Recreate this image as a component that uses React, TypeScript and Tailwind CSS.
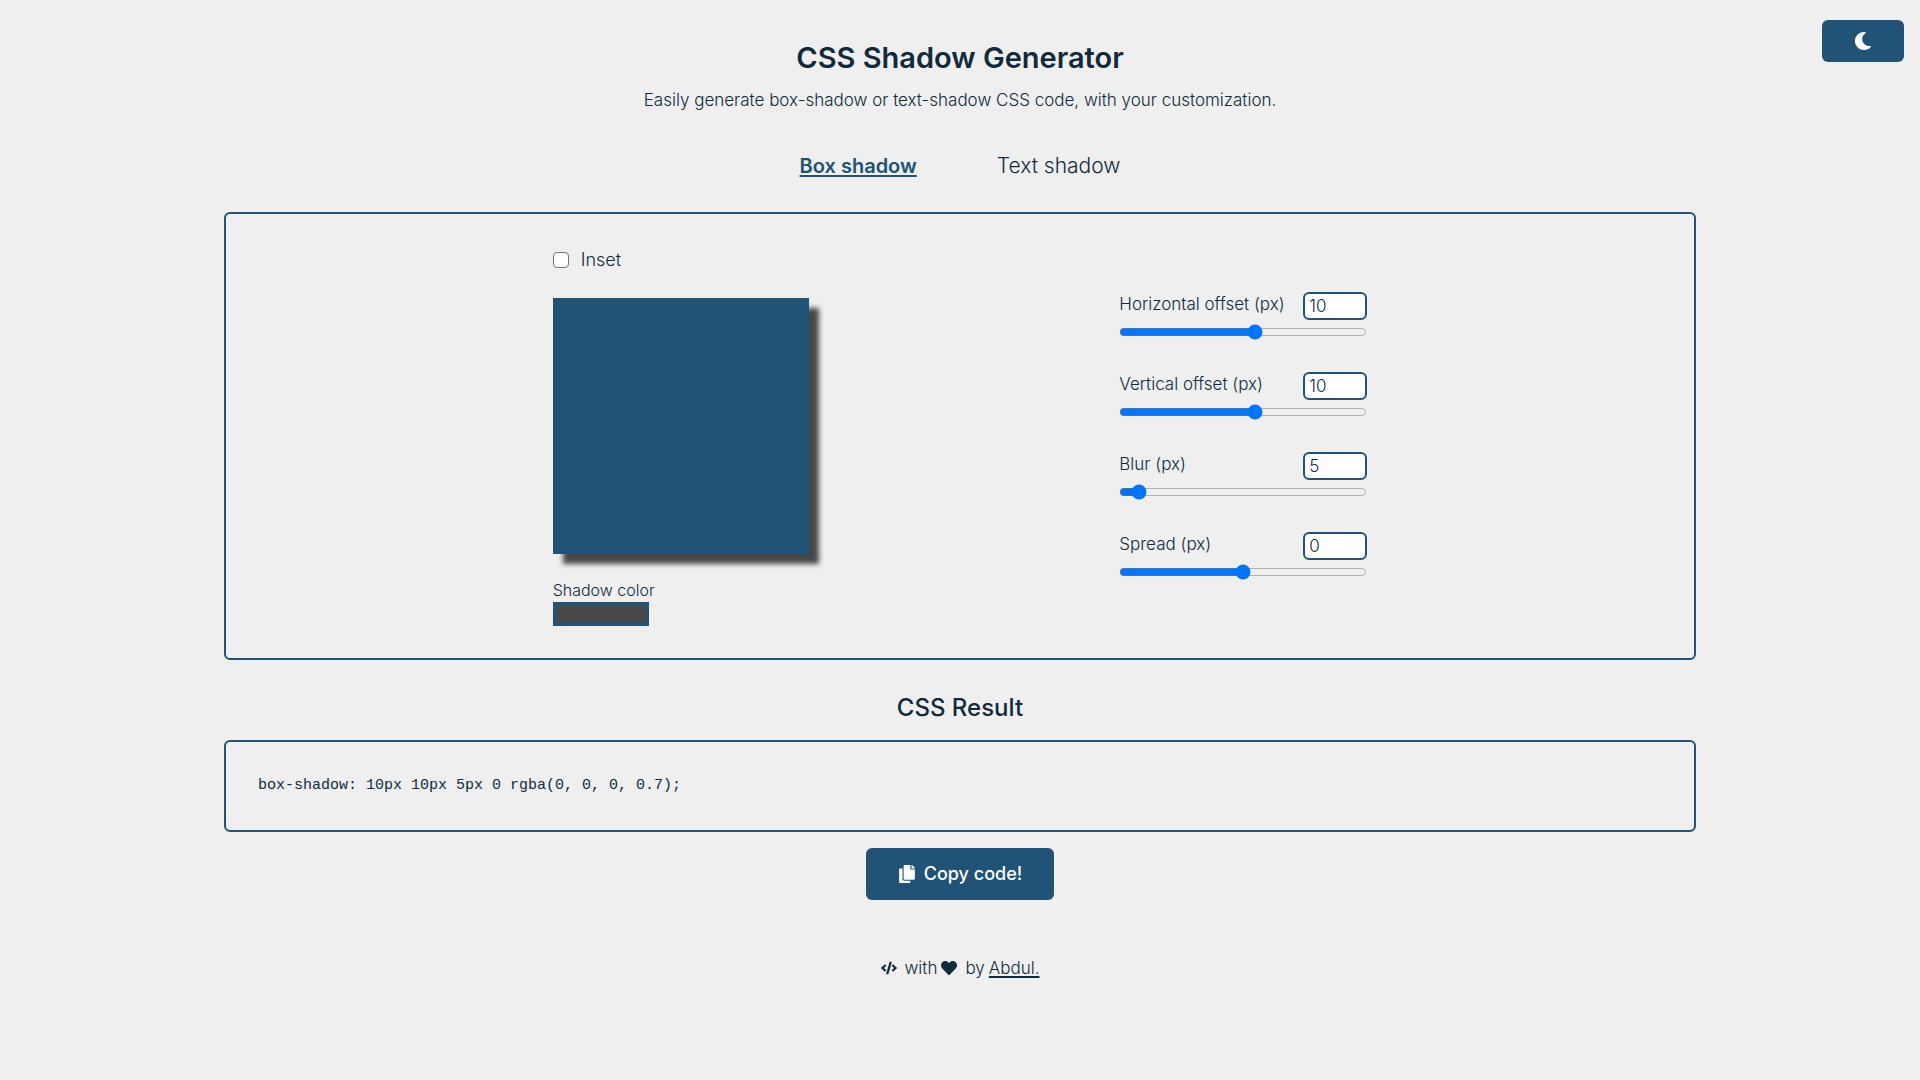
import React, { useId, useState } from "react";
import { FaCode, FaCopy, FaHeart, FaMoon } from "react-icons/fa";

type Mode = "box" | "text";

function Tab({ active, onClick, children }: { active: boolean; onClick: () => void; children: React.ReactNode }) {
  return (
    <button
      type="button"
      onClick={onClick}
      className={
        active
          ? "text-xl leading-7 font-semibold text-[#205375] underline decoration-2 underline-offset-2"
          : "text-[21px] leading-7 font-light"
      }
    >
      {children}
    </button>
  );
}

function SliderField({
  label,
  min,
  max,
  value,
  onChange,
}: {
  label: string;
  min: number;
  max: number;
  value: number;
  onChange: (value: number) => void;
}) {
  const id = useId();
  return (
    <div>
      <div className="flex items-start justify-between">
        <label htmlFor={id} className="text-[17px] leading-6">
          {label}
        </label>
        <input
          id={id}
          type="number"
          min={min}
          max={max}
          value={value}
          onChange={(e) => onChange(Number(e.target.value))}
          className="h-7 w-16 rounded-md border-2 border-[#205375] bg-white px-1 text-[17px] leading-6"
        />
      </div>
      <input
        type="range"
        aria-label={label}
        min={min}
        max={max}
        value={value}
        onChange={(e) => onChange(Number(e.target.value))}
        className="mt-1 block h-4 w-full"
      />
    </div>
  );
}

export default function App() {
  const [mode, setMode] = useState<Mode>("box");
  const [inset, setInset] = useState(false);
  const [x, setX] = useState(10);
  const [y, setY] = useState(10);
  const [blur, setBlur] = useState(5);
  const [spread, setSpread] = useState(0);
  const [color, setColor] = useState("#484848");

  const px = (n: number) => (n === 0 ? "0" : `${n}px`);
  const cssColor = color === "#484848" ? "rgba(0, 0, 0, 0.7)" : color;
  const shadow =
    mode === "box"
      ? `${inset ? "inset " : ""}${px(x)} ${px(y)} ${px(blur)} ${px(spread)} ${cssColor}`
      : `${px(x)} ${px(y)} ${px(blur)} ${cssColor}`;
  const code = `${mode}-shadow: ${shadow};`;

  return (
    <div className="relative min-h-screen bg-[#efefef] px-4 pt-10 pb-10 font-['Inter',sans-serif] font-light text-[#112b3c] lg:px-56">
      <button
        type="button"
        aria-label="Toggle dark mode"
        className="absolute top-5 right-4 rounded-md bg-[#205375] px-8 py-3 text-white"
      >
        <FaMoon className="size-[18px]" />
      </button>

      <header className="text-center">
        <h1 className="text-[29px] leading-9 font-semibold">CSS Shadow Generator</h1>
        <p className="mt-3 text-[17px] leading-6">
          Easily generate box-shadow or text-shadow CSS code, with your customization.
        </p>
      </header>

      <nav className="mt-10 flex justify-center gap-20">
        <Tab active={mode === "box"} onClick={() => setMode("box")}>
          Box shadow
        </Tab>
        <Tab active={mode === "text"} onClick={() => setMode("text")}>
          Text shadow
        </Tab>
      </nav>

      <main>
        <section className="mt-8 flex flex-wrap items-center justify-evenly gap-y-8 rounded-md border-2 border-[#205375] px-4 py-8">
          <div>
            <label className="flex items-center gap-3 text-lg leading-7">
              <input
                type="checkbox"
                checked={inset}
                onChange={(e) => setInset(e.target.checked)}
                className="size-4 appearance-none rounded border border-[#6b7280] bg-white checked:bg-[#205375]"
              />
              Inset
            </label>
            {mode === "box" ? (
              <div className="mt-6 size-64 bg-[#205375]" style={{ boxShadow: shadow }} />
            ) : (
              <div className="mt-6 flex size-64 items-center justify-center text-4xl" style={{ textShadow: shadow }}>
                Text shadow
              </div>
            )}
            <label htmlFor="shadow-color" className="mt-6 block text-base leading-6">
              Shadow color
            </label>
            <input
              id="shadow-color"
              type="color"
              value={color}
              onChange={(e) => setColor(e.target.value)}
              className="block h-6 w-24 border-3 border-[#205375] bg-[#205375] p-0 [&::-webkit-color-swatch-wrapper]:p-0 [&::-webkit-color-swatch]:rounded-none [&::-webkit-color-swatch]:border [&::-webkit-color-swatch]:border-[#36505f]"
            />
          </div>

          <div className="flex w-62 flex-col gap-8">
            <SliderField label="Horizontal offset (px)" min={-100} max={100} value={x} onChange={setX} />
            <SliderField label="Vertical offset (px)" min={-100} max={100} value={y} onChange={setY} />
            <SliderField label="Blur (px)" min={0} max={100} value={blur} onChange={setBlur} />
            <SliderField label="Spread (px)" min={-100} max={100} value={spread} onChange={setSpread} />
          </div>
        </section>

        <h2 className="mt-8 text-center text-2xl leading-8 font-medium">CSS Result</h2>
        <pre className="mt-4 overflow-x-auto rounded-md border-2 border-[#205375] p-8 font-['Liberation_Mono',monospace] text-[15px] leading-6 font-normal">
          <code className="font-['Liberation_Mono',monospace]">{code}</code>
        </pre>

        <button
          type="button"
          onClick={() => navigator.clipboard?.writeText(code)}
          className="mx-auto mt-4 flex items-center gap-2 rounded-md bg-[#205375] px-8 py-3 text-lg leading-7 font-medium text-white"
        >
          <FaCopy className="size-[18px]" />
          Copy code!
        </button>
      </main>

      <footer className="mt-14 flex items-center justify-center text-[17px] leading-6">
        <FaCode className="mr-2 size-4" />
        with
        <FaHeart className="mr-2 ml-1 size-4" />
        by
        <a href="#abdul" className="ml-1 underline decoration-2 underline-offset-2">
          Abdul.
        </a>
      </footer>
    </div>
  );
}
